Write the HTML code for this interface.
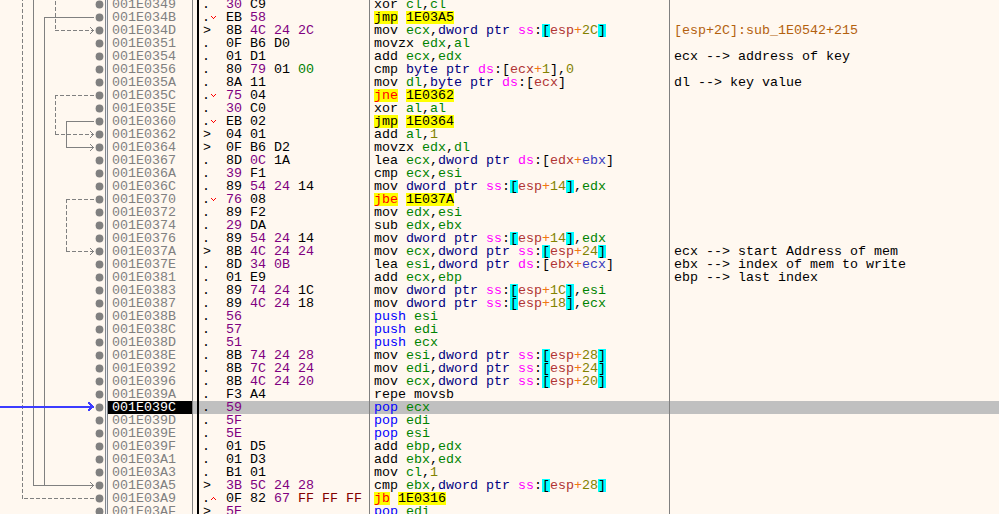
<!DOCTYPE html>
<html><head><meta charset="utf-8"><title>disassembly</title>
<style>
html,body{margin:0;padding:0;background:#fff8f0;}
body{width:999px;height:514px;overflow:hidden;position:relative;font-family:"Liberation Mono","Liberation Mono","DejaVu Sans Mono",monospace;font-size:13.333px;line-height:13px;color:#000;}
#v{position:absolute;left:0;top:0;width:999px;height:514px;overflow:hidden;background:#fff8f0;}
.r{position:absolute;left:0;width:999px;height:13px;white-space:pre;}
.r>span,.r>i{position:absolute;top:0;height:13px;white-space:pre;font-style:normal;}
.a{left:112px;color:#808080;}
.k{left:202px;}
.k.g{left:203px;}
.y{left:226px;}
.n{left:374px;}
.c{left:674px;}
.au{color:#b3610e;}
.sel{position:absolute;left:192px;top:401px;width:807px;height:13px;background:#c0c0c0;}
.cip{position:absolute;left:108px;top:401px;width:84px;height:13px;background:#000;}
.r .ac{color:#fff;}
.bp{color:#800080;}.b0{color:#008000;}.bf{color:#800000;}.b7{color:#808000;}
.uj{background:#ffff00;}.cj{background:#ffff00;color:#ff0000;}.ad{background:#ffff00;}
.pp{color:#0000ff;}.rg{color:#008300;}.sz{color:#000080;}.sg{color:#ff00ff;}
.sb{background:#00ffff;}.mb{color:#b03434;}.mi{color:#3838bc;}.op{color:#f27711;}.vl{color:#828200;}
.n span{display:inline-block;height:13px;vertical-align:top;}
svg{position:absolute;left:0;top:0;}
</style></head><body><div id="v">
<div class="sel"></div><div class="cip"></div>

<svg width="999" height="514" viewBox="0 0 999 514">
<rect x="105" y="0" width="1" height="514" fill="#82878f"/>
<rect x="106" y="0" width="1" height="514" fill="#eef0f4"/>
<rect x="107" y="0" width="1" height="514" fill="#82878f"/>
<rect x="192" y="0" width="1" height="514" fill="#808080"/>
<rect x="197" y="0" width="2" height="514" fill="#000"/>
<rect x="369" y="0" width="1" height="514" fill="#808080"/>
<rect x="669" y="0" width="1" height="514" fill="#808080"/>
<g fill="none" stroke="#808080" stroke-width="1" shape-rendering="crispEdges">
<path d="M94,498.5 L22,498.5" stroke-dasharray="4 2"/>
<path d="M22.5,499.0 L22.5,-7" stroke-dasharray="4 2"/>
<path d="M33.5,-5 L33.5,486.0"/>
<path d="M33,485.5 L94,485.5"/>
<path d="M90,482h1v1h-1zM91,483h1v1h-1zM92,484h1v1h-1zM93,485h1v1h-1zM92,486h1v1h-1zM91,487h1v1h-1zM90,488h1v1h-1z" fill="#808080" stroke="none"/>
<path d="M94,17.5 L44,17.5"/>
<path d="M44.5,17.0 L44.5,486.0"/>
<path d="M44,485.5 L94,485.5"/>
<path d="M90,482h1v1h-1zM91,483h1v1h-1zM92,484h1v1h-1zM93,485h1v1h-1zM92,486h1v1h-1zM91,487h1v1h-1zM90,488h1v1h-1z" fill="#808080" stroke="none"/>
<path d="M55.5,-5 L55.5,31.0" stroke-dasharray="4 2"/>
<path d="M55,30.5 L94,30.5" stroke-dasharray="4 2"/>
<path d="M90,27h1v1h-1zM91,28h1v1h-1zM92,29h1v1h-1zM93,30h1v1h-1zM92,31h1v1h-1zM91,32h1v1h-1zM90,33h1v1h-1z" fill="#808080" stroke="none"/>
<path d="M94,95.5 L55,95.5" stroke-dasharray="4 2"/>
<path d="M55.5,95.0 L55.5,135.0" stroke-dasharray="4 2"/>
<path d="M55,134.5 L94,134.5" stroke-dasharray="4 2"/>
<path d="M90,131h1v1h-1zM91,132h1v1h-1zM92,133h1v1h-1zM93,134h1v1h-1zM92,135h1v1h-1zM91,136h1v1h-1zM90,137h1v1h-1z" fill="#808080" stroke="none"/>
<path d="M94,121.5 L66,121.5"/>
<path d="M66.5,121.0 L66.5,148.0"/>
<path d="M66,147.5 L94,147.5"/>
<path d="M90,144h1v1h-1zM91,145h1v1h-1zM92,146h1v1h-1zM93,147h1v1h-1zM92,148h1v1h-1zM91,149h1v1h-1zM90,150h1v1h-1z" fill="#808080" stroke="none"/>
<path d="M94,199.5 L66,199.5" stroke-dasharray="4 2"/>
<path d="M66.5,199.0 L66.5,252.0" stroke-dasharray="4 2"/>
<path d="M66,251.5 L94,251.5" stroke-dasharray="4 2"/>
<path d="M90,248h1v1h-1zM91,249h1v1h-1zM92,250h1v1h-1zM93,251h1v1h-1zM92,252h1v1h-1zM91,253h1v1h-1zM90,254h1v1h-1z" fill="#808080" stroke="none"/>
</g>
<circle cx="99.5" cy="4.5" r="3.9" fill="#808080"/>
<circle cx="99.5" cy="17.5" r="3.9" fill="#808080"/>
<circle cx="99.5" cy="30.5" r="3.9" fill="#808080"/>
<circle cx="99.5" cy="43.5" r="3.9" fill="#808080"/>
<circle cx="99.5" cy="56.5" r="3.9" fill="#808080"/>
<circle cx="99.5" cy="69.5" r="3.9" fill="#808080"/>
<circle cx="99.5" cy="82.5" r="3.9" fill="#808080"/>
<circle cx="99.5" cy="95.5" r="3.9" fill="#808080"/>
<circle cx="99.5" cy="108.5" r="3.9" fill="#808080"/>
<circle cx="99.5" cy="121.5" r="3.9" fill="#808080"/>
<circle cx="99.5" cy="134.5" r="3.9" fill="#808080"/>
<circle cx="99.5" cy="147.5" r="3.9" fill="#808080"/>
<circle cx="99.5" cy="160.5" r="3.9" fill="#808080"/>
<circle cx="99.5" cy="173.5" r="3.9" fill="#808080"/>
<circle cx="99.5" cy="186.5" r="3.9" fill="#808080"/>
<circle cx="99.5" cy="199.5" r="3.9" fill="#808080"/>
<circle cx="99.5" cy="212.5" r="3.9" fill="#808080"/>
<circle cx="99.5" cy="225.5" r="3.9" fill="#808080"/>
<circle cx="99.5" cy="238.5" r="3.9" fill="#808080"/>
<circle cx="99.5" cy="251.5" r="3.9" fill="#808080"/>
<circle cx="99.5" cy="264.5" r="3.9" fill="#808080"/>
<circle cx="99.5" cy="277.5" r="3.9" fill="#808080"/>
<circle cx="99.5" cy="290.5" r="3.9" fill="#808080"/>
<circle cx="99.5" cy="303.5" r="3.9" fill="#808080"/>
<circle cx="99.5" cy="316.5" r="3.9" fill="#808080"/>
<circle cx="99.5" cy="329.5" r="3.9" fill="#808080"/>
<circle cx="99.5" cy="342.5" r="3.9" fill="#808080"/>
<circle cx="99.5" cy="355.5" r="3.9" fill="#808080"/>
<circle cx="99.5" cy="368.5" r="3.9" fill="#808080"/>
<circle cx="99.5" cy="381.5" r="3.9" fill="#808080"/>
<circle cx="99.5" cy="394.5" r="3.9" fill="#808080"/>
<circle cx="99.5" cy="407.5" r="3.9" fill="#808080"/>
<circle cx="99.5" cy="420.5" r="3.9" fill="#808080"/>
<circle cx="99.5" cy="433.5" r="3.9" fill="#808080"/>
<circle cx="99.5" cy="446.5" r="3.9" fill="#808080"/>
<circle cx="99.5" cy="459.5" r="3.9" fill="#808080"/>
<circle cx="99.5" cy="472.5" r="3.9" fill="#808080"/>
<circle cx="99.5" cy="485.5" r="3.9" fill="#808080"/>
<circle cx="99.5" cy="498.5" r="3.9" fill="#808080"/>
<circle cx="99.5" cy="511.5" r="3.9" fill="#808080"/>
<path d="M0,406h93v2h-93zM88,402h2v2h-2zM89,403h2v2h-2zM90,404h2v2h-2zM91,405h2v2h-2zM92,406h2v2h-2zM91,406h2v2h-2zM90,407h2v2h-2zM89,408h2v2h-2zM88,409h2v2h-2z" fill="#3c3cff" shape-rendering="crispEdges"/>
<path d="M211,16h1v1h-1zM215,16h1v1h-1zM212,17h1v1h-1zM214,17h1v1h-1zM213,18h1v1h-1z" fill="#ff0000"/>
<path d="M211,94h1v1h-1zM215,94h1v1h-1zM212,95h1v1h-1zM214,95h1v1h-1zM213,96h1v1h-1z" fill="#ff0000"/>
<path d="M211,120h1v1h-1zM215,120h1v1h-1zM212,121h1v1h-1zM214,121h1v1h-1zM213,122h1v1h-1z" fill="#ff0000"/>
<path d="M211,198h1v1h-1zM215,198h1v1h-1zM212,199h1v1h-1zM214,199h1v1h-1zM213,200h1v1h-1z" fill="#ff0000"/>
<path d="M213,497h1v1h-1zM212,498h1v1h-1zM214,498h1v1h-1zM211,499h1v1h-1zM215,499h1v1h-1z" fill="#ff0000"/>
</svg>
<div class="r" style="top:-2px"><span class="a">001E0349</span><span class="k">.</span><span class="y"><span class="bp">30</span> C9</span><span class="n">xor <span class="rg">cl</span>,<span class="rg">cl</span></span></div>
<div class="r" style="top:11px"><span class="a">001E034B</span><span class="k">.</span><span class="y">EB <span class="bp">58</span></span><span class="n"><span class="uj">jmp</span> <span class="ad">1E03A5</span></span></div>
<div class="r" style="top:24px"><span class="a">001E034D</span><span class="k g">&gt;</span><span class="y">8B <span class="bp">4C</span> <span class="bp">24</span> <span class="bp">2C</span></span><span class="n">mov <span class="rg">ecx</span>,<span class="sz">dword ptr</span> <span class="sg">ss</span>:<span class="sb">[</span><span class="mb">esp</span><span class="op">+</span><span class="vl">2C</span><span class="sb">]</span></span><span class="c au">[esp+2C]:sub_1E0542+215</span></div>
<div class="r" style="top:37px"><span class="a">001E0351</span><span class="k">.</span><span class="y">0F B6 D0</span><span class="n">movzx <span class="rg">edx</span>,<span class="rg">al</span></span></div>
<div class="r" style="top:50px"><span class="a">001E0354</span><span class="k">.</span><span class="y">01 D1</span><span class="n">add <span class="rg">ecx</span>,<span class="rg">edx</span></span><span class="c">ecx --&gt; address of key</span></div>
<div class="r" style="top:63px"><span class="a">001E0356</span><span class="k">.</span><span class="y">80 <span class="bp">79</span> 01 <span class="b0">00</span></span><span class="n">cmp <span class="sz">byte ptr</span> <span class="sg">ds</span>:[<span class="mb">ecx</span><span class="op">+</span><span class="vl">1</span>],<span class="vl">0</span></span></div>
<div class="r" style="top:76px"><span class="a">001E035A</span><span class="k">.</span><span class="y">8A 11</span><span class="n">mov <span class="rg">dl</span>,<span class="sz">byte ptr</span> <span class="sg">ds</span>:[<span class="mb">ecx</span>]</span><span class="c">dl --&gt; key value</span></div>
<div class="r" style="top:89px"><span class="a">001E035C</span><span class="k">.</span><span class="y"><span class="bp">75</span> 04</span><span class="n"><span class="cj">jne</span> <span class="ad">1E0362</span></span></div>
<div class="r" style="top:102px"><span class="a">001E035E</span><span class="k">.</span><span class="y"><span class="bp">30</span> C0</span><span class="n">xor <span class="rg">al</span>,<span class="rg">al</span></span></div>
<div class="r" style="top:115px"><span class="a">001E0360</span><span class="k">.</span><span class="y">EB 02</span><span class="n"><span class="uj">jmp</span> <span class="ad">1E0364</span></span></div>
<div class="r" style="top:128px"><span class="a">001E0362</span><span class="k g">&gt;</span><span class="y">04 01</span><span class="n">add <span class="rg">al</span>,<span class="vl">1</span></span></div>
<div class="r" style="top:141px"><span class="a">001E0364</span><span class="k g">&gt;</span><span class="y">0F B6 D2</span><span class="n">movzx <span class="rg">edx</span>,<span class="rg">dl</span></span></div>
<div class="r" style="top:154px"><span class="a">001E0367</span><span class="k">.</span><span class="y">8D <span class="bp">0C</span> 1A</span><span class="n">lea <span class="rg">ecx</span>,<span class="sz">dword ptr</span> <span class="sg">ds</span>:[<span class="mb">edx</span><span class="op">+</span><span class="mi">ebx</span>]</span></div>
<div class="r" style="top:167px"><span class="a">001E036A</span><span class="k">.</span><span class="y"><span class="bp">39</span> F1</span><span class="n">cmp <span class="rg">ecx</span>,<span class="rg">esi</span></span></div>
<div class="r" style="top:180px"><span class="a">001E036C</span><span class="k">.</span><span class="y">89 <span class="bp">54</span> <span class="bp">24</span> 14</span><span class="n">mov <span class="sz">dword ptr</span> <span class="sg">ss</span>:<span class="sb">[</span><span class="mb">esp</span><span class="op">+</span><span class="vl">14</span><span class="sb">]</span>,<span class="rg">edx</span></span></div>
<div class="r" style="top:193px"><span class="a">001E0370</span><span class="k">.</span><span class="y"><span class="bp">76</span> 08</span><span class="n"><span class="cj">jbe</span> <span class="ad">1E037A</span></span></div>
<div class="r" style="top:206px"><span class="a">001E0372</span><span class="k">.</span><span class="y">89 F2</span><span class="n">mov <span class="rg">edx</span>,<span class="rg">esi</span></span></div>
<div class="r" style="top:219px"><span class="a">001E0374</span><span class="k">.</span><span class="y"><span class="bp">29</span> DA</span><span class="n">sub <span class="rg">edx</span>,<span class="rg">ebx</span></span></div>
<div class="r" style="top:232px"><span class="a">001E0376</span><span class="k">.</span><span class="y">89 <span class="bp">54</span> <span class="bp">24</span> 14</span><span class="n">mov <span class="sz">dword ptr</span> <span class="sg">ss</span>:<span class="sb">[</span><span class="mb">esp</span><span class="op">+</span><span class="vl">14</span><span class="sb">]</span>,<span class="rg">edx</span></span></div>
<div class="r" style="top:245px"><span class="a">001E037A</span><span class="k g">&gt;</span><span class="y">8B <span class="bp">4C</span> <span class="bp">24</span> <span class="bp">24</span></span><span class="n">mov <span class="rg">ecx</span>,<span class="sz">dword ptr</span> <span class="sg">ss</span>:<span class="sb">[</span><span class="mb">esp</span><span class="op">+</span><span class="vl">24</span><span class="sb">]</span></span><span class="c">ecx --&gt; start Address of mem</span></div>
<div class="r" style="top:258px"><span class="a">001E037E</span><span class="k">.</span><span class="y">8D <span class="bp">34</span> <span class="bp">0B</span></span><span class="n">lea <span class="rg">esi</span>,<span class="sz">dword ptr</span> <span class="sg">ds</span>:[<span class="mb">ebx</span><span class="op">+</span><span class="mi">ecx</span>]</span><span class="c">ebx --&gt; index of mem to write</span></div>
<div class="r" style="top:271px"><span class="a">001E0381</span><span class="k">.</span><span class="y">01 E9</span><span class="n">add <span class="rg">ecx</span>,<span class="rg">ebp</span></span><span class="c">ebp --&gt; last index</span></div>
<div class="r" style="top:284px"><span class="a">001E0383</span><span class="k">.</span><span class="y">89 <span class="bp">74</span> <span class="bp">24</span> 1C</span><span class="n">mov <span class="sz">dword ptr</span> <span class="sg">ss</span>:<span class="sb">[</span><span class="mb">esp</span><span class="op">+</span><span class="vl">1C</span><span class="sb">]</span>,<span class="rg">esi</span></span></div>
<div class="r" style="top:297px"><span class="a">001E0387</span><span class="k">.</span><span class="y">89 <span class="bp">4C</span> <span class="bp">24</span> 18</span><span class="n">mov <span class="sz">dword ptr</span> <span class="sg">ss</span>:<span class="sb">[</span><span class="mb">esp</span><span class="op">+</span><span class="vl">18</span><span class="sb">]</span>,<span class="rg">ecx</span></span></div>
<div class="r" style="top:310px"><span class="a">001E038B</span><span class="k">.</span><span class="y"><span class="bp">56</span></span><span class="n"><span class="pp">push</span> <span class="rg">esi</span></span></div>
<div class="r" style="top:323px"><span class="a">001E038C</span><span class="k">.</span><span class="y"><span class="bp">57</span></span><span class="n"><span class="pp">push</span> <span class="rg">edi</span></span></div>
<div class="r" style="top:336px"><span class="a">001E038D</span><span class="k">.</span><span class="y"><span class="bp">51</span></span><span class="n"><span class="pp">push</span> <span class="rg">ecx</span></span></div>
<div class="r" style="top:349px"><span class="a">001E038E</span><span class="k">.</span><span class="y">8B <span class="bp">74</span> <span class="bp">24</span> <span class="bp">28</span></span><span class="n">mov <span class="rg">esi</span>,<span class="sz">dword ptr</span> <span class="sg">ss</span>:<span class="sb">[</span><span class="mb">esp</span><span class="op">+</span><span class="vl">28</span><span class="sb">]</span></span></div>
<div class="r" style="top:362px"><span class="a">001E0392</span><span class="k">.</span><span class="y">8B <span class="bp">7C</span> <span class="bp">24</span> <span class="bp">24</span></span><span class="n">mov <span class="rg">edi</span>,<span class="sz">dword ptr</span> <span class="sg">ss</span>:<span class="sb">[</span><span class="mb">esp</span><span class="op">+</span><span class="vl">24</span><span class="sb">]</span></span></div>
<div class="r" style="top:375px"><span class="a">001E0396</span><span class="k">.</span><span class="y">8B <span class="bp">4C</span> <span class="bp">24</span> <span class="bp">20</span></span><span class="n">mov <span class="rg">ecx</span>,<span class="sz">dword ptr</span> <span class="sg">ss</span>:<span class="sb">[</span><span class="mb">esp</span><span class="op">+</span><span class="vl">20</span><span class="sb">]</span></span></div>
<div class="r" style="top:388px"><span class="a">001E039A</span><span class="k">.</span><span class="y">F3 A4</span><span class="n">repe movsb</span></div>
<div class="r" style="top:401px"><span class="a ac">001E039C</span><span class="k">.</span><span class="y"><span class="bp">59</span></span><span class="n"><span class="pp">pop</span> <span class="rg">ecx</span></span></div>
<div class="r" style="top:414px"><span class="a">001E039D</span><span class="k">.</span><span class="y"><span class="bp">5F</span></span><span class="n"><span class="pp">pop</span> <span class="rg">edi</span></span></div>
<div class="r" style="top:427px"><span class="a">001E039E</span><span class="k">.</span><span class="y"><span class="bp">5E</span></span><span class="n"><span class="pp">pop</span> <span class="rg">esi</span></span></div>
<div class="r" style="top:440px"><span class="a">001E039F</span><span class="k">.</span><span class="y">01 D5</span><span class="n">add <span class="rg">ebp</span>,<span class="rg">edx</span></span></div>
<div class="r" style="top:453px"><span class="a">001E03A1</span><span class="k">.</span><span class="y">01 D3</span><span class="n">add <span class="rg">ebx</span>,<span class="rg">edx</span></span></div>
<div class="r" style="top:466px"><span class="a">001E03A3</span><span class="k">.</span><span class="y">B1 01</span><span class="n">mov <span class="rg">cl</span>,<span class="vl">1</span></span></div>
<div class="r" style="top:479px"><span class="a">001E03A5</span><span class="k g">&gt;</span><span class="y"><span class="bp">3B</span> <span class="bp">5C</span> <span class="bp">24</span> <span class="bp">28</span></span><span class="n">cmp <span class="rg">ebx</span>,<span class="sz">dword ptr</span> <span class="sg">ss</span>:<span class="sb">[</span><span class="mb">esp</span><span class="op">+</span><span class="vl">28</span><span class="sb">]</span></span></div>
<div class="r" style="top:492px"><span class="a">001E03A9</span><span class="k">.</span><span class="y">0F 82 <span class="bp">67</span> <span class="bf">FF</span> <span class="bf">FF</span> <span class="bf">FF</span></span><span class="n"><span class="cj">jb</span> <span class="ad">1E0316</span></span></div>
<div class="r" style="top:505px"><span class="a">001E03AF</span><span class="k g">&gt;</span><span class="y"><span class="bp">5E</span></span><span class="n"><span class="pp">pop</span> <span class="rg">edi</span></span></div>
</div></body></html>
